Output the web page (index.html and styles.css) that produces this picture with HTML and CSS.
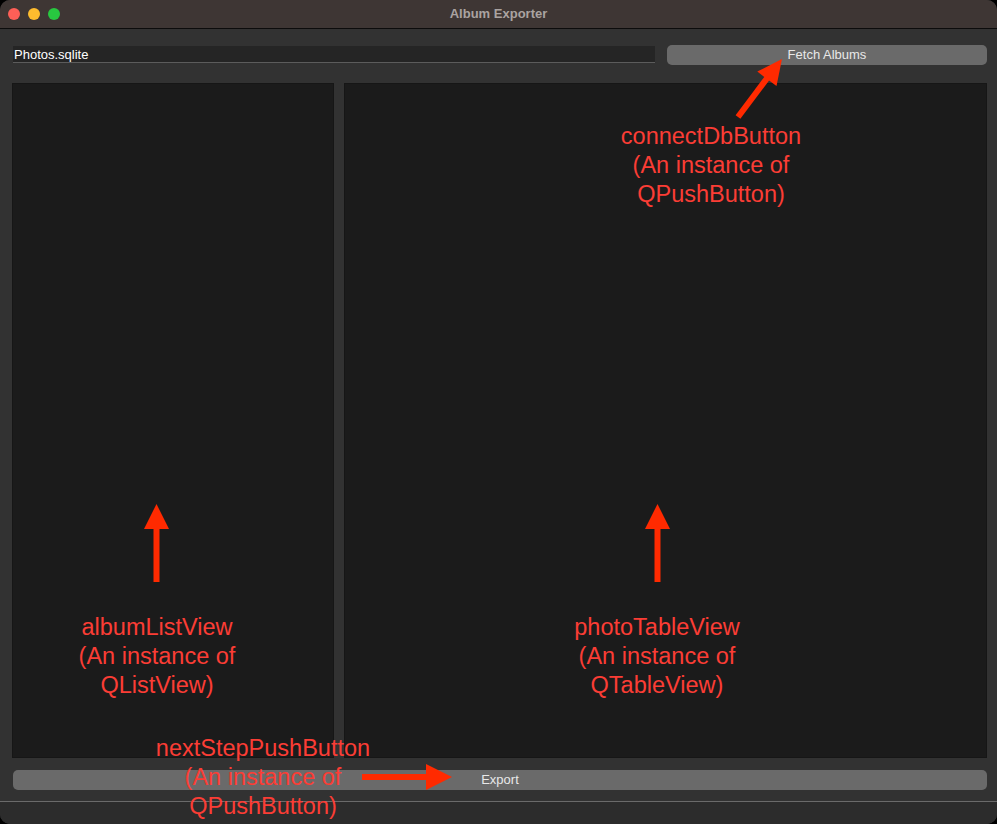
FILE: index.html
```html
<!DOCTYPE html>
<html lang="en">

<head>
  <meta charset="UTF-8">
  <title>Album Exporter</title>
  <link rel="stylesheet" href="styles.css">
</head>

<body>
  <div class="window">
    <header class="titlebar">
      <div class="lights">
        <span class="light red"></span>
        <span class="light yellow"></span>
        <span class="light green"></span>
      </div>
      <div class="title">Album Exporter</div>
    </header>

    <main class="content">
      <div class="toolbar">
        <div class="db-input">Photos.sqlite</div>
        <button class="push-btn fetch-btn">Fetch Albums</button>
      </div>

      <div class="views">
        <div class="view album-list"></div>
        <div class="view photo-table"></div>
      </div>

      <button class="push-btn export-btn">Export</button>
    </main>

    <footer class="statusbar"></footer>

    <!-- annotations -->
    <svg class="arrows" width="997" height="824" viewBox="0 0 997 824">
      <g fill="#ff2a00" stroke="none">
        <polygon points="144,529 156.5,504 169,529" />
        <rect x="153.5" y="528" width="6" height="54" />
        <polygon points="645,529 657.5,504 670,529" />
        <rect x="654.5" y="528" width="6" height="54" />
        <polygon points="426,764 452,777 426,790" />
        <rect x="362" y="774" width="66" height="6" />
        <polygon points="782,59 776.5,86 757.3,71.6" />
      </g>
      <line x1="738" y1="117" x2="768" y2="77" stroke="#ff2a00" stroke-width="6" />
    </svg>

    <div class="note note-album">albumListView<br>(An instance of<br>QListView)</div>
    <div class="note note-photo">photoTableView<br>(An instance of<br>QTableView)</div>
    <div class="note note-connect">connectDbButton<br>(An instance of<br>QPushButton)</div>
    <div class="note note-next">nextStepPushButton<br>(An instance of<br>QPushButton)</div>
  </div>
</body>

</html>
```

FILE: styles.css
```css
body {
  margin: 0;
  background-color: #000;
  font-family: 'Liberation Sans', Arial, sans-serif;
}

.window {
  position: relative;
  width: 997px;
  height: 824px;
  display: flex;
  flex-direction: column;
  background-color: #323232;
  border-radius: 10px;
  overflow: hidden;
}

/* TITLE BAR */
.titlebar {
  position: relative;
  height: 28px;
  flex-shrink: 0;
  background-color: #3e3634;
  border-bottom: 1px solid #0c0c0c;
  display: flex;
  align-items: center;
  justify-content: center;
}

.lights {
  position: absolute;
  left: 8px;
  top: 8px;
  display: flex;
  gap: 8px;
}

.light {
  width: 12px;
  height: 12px;
  border-radius: 50%;
}

.red { background-color: #fe5f57; }
.yellow { background-color: #febc2e; }
.green { background-color: #28c840; }

.title {
  color: #aaa3a1;
  font-size: 13px;
  font-weight: bold;
  margin-bottom: 1px;
}

/* MAIN */
.content {
  display: flex;
  flex-direction: column;
  padding: 16px 10px 0 12px;
}

.toolbar {
  display: flex;
  gap: 12px;
  height: 20px;
}

.db-input {
  flex: 1;
  margin: 1px 0 0 1px;
  height: 16px;
  background-color: #252525;
  border-bottom: 1px solid #5c5c5c;
  color: #fff;
  font-size: 13px;
  line-height: 18px;
  padding-left: 1px;
}

.push-btn {
  border: none;
  border-radius: 5px;
  background-color: #6a6a6a;
  color: #e8e8e8;
  font-family: inherit;
  font-size: 13px;
  padding: 0 0 2px;
  height: 20px;
}

.fetch-btn {
  width: 320px;
}

.views {
  display: flex;
  gap: 10px;
  margin-top: 18px;
  height: 675px;
}

.view {
  background-color: #1b1b1b;
  box-shadow: inset 0 0 0 1px #161616;
}

.album-list {
  width: 322px;
}

.photo-table {
  flex: 1;
}

.export-btn {
  margin: 12px 0 0 1px;
}

.statusbar {
  margin-top: 11px;
  flex: 1;
  border-top: 1px solid #6a6a6a;
  background-color: #2c2c2c;
}

/* ANNOTATIONS */
.arrows {
  position: absolute;
  left: 0;
  top: 0;
}

.note {
  position: absolute;
  width: 260px;
  text-align: center;
  color: #fb3d35;
  font-size: 23.5px;
  line-height: 29px;
}

.note-album { left: 27px; top: 613px; }
.note-photo { left: 527px; top: 613px; }
.note-connect { left: 581px; top: 122px; }
.note-next { left: 133px; top: 734px; }
```
